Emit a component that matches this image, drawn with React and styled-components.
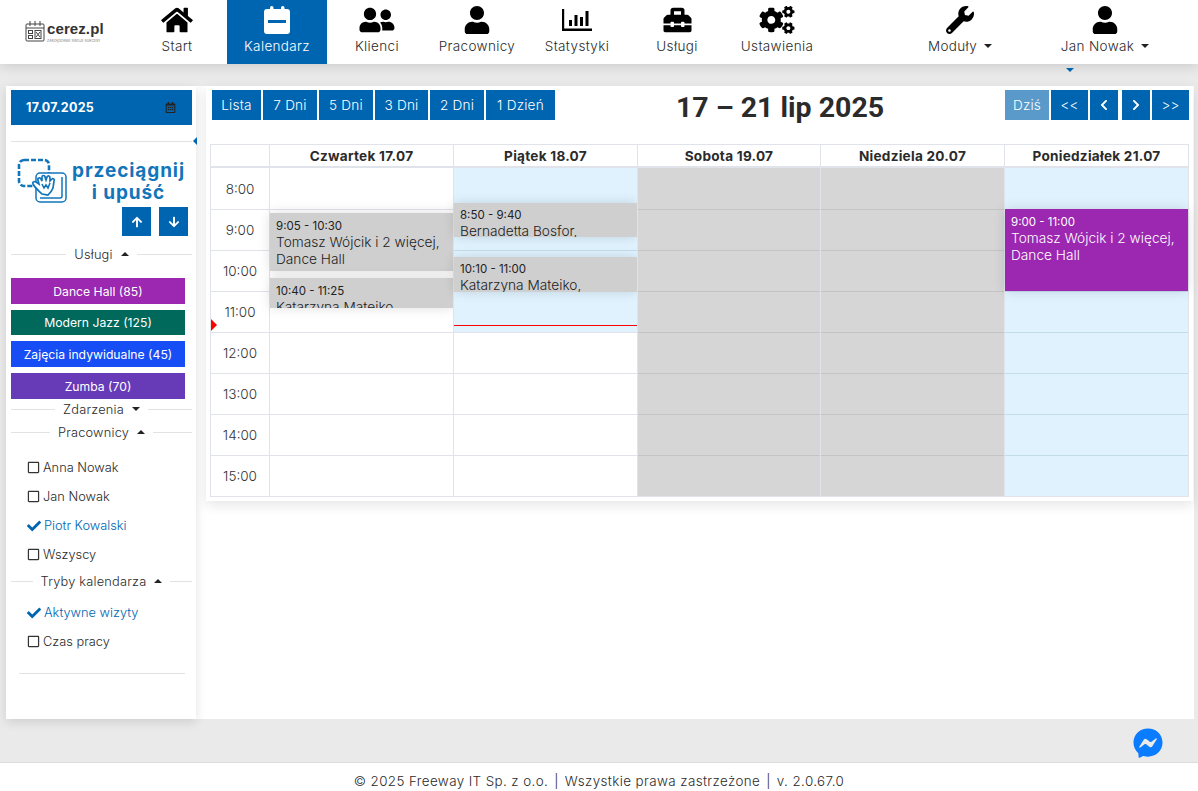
import React from 'react';
import styled, { createGlobalStyle } from 'styled-components';
import {
  FaHome, FaUserFriends, FaUser, FaToolbox, FaCogs, FaWrench, FaChevronLeft, FaChevronRight,
  FaArrowUp, FaArrowDown, FaCheck, FaRegSquare, FaFacebookMessenger, FaRegCalendarAlt,
} from 'react-icons/fa';

const BLUE = '#0065b0';

const GlobalStyle = createGlobalStyle`
  html, body { margin: 0; padding: 0; height: 100%; }
  body {
    background: #eaeaea;
    font-family: Inter, "Liberation Sans", sans-serif;
    color: #2b2b2b;
    overflow: hidden;
  }
  * { box-sizing: border-box; }
`;

const Page = styled.div`
  width: 1198px;
  height: 791px;
  display: flex;
  flex-direction: column;
`;

const Header = styled.header`
  height: 64px;
  flex: none;
  background: #fff;
  display: flex;
  box-shadow: 0 2px 12px rgba(0, 0, 0, 0.14);
  position: relative;
  z-index: 3;
`;

const LogoBox = styled.div`
  width: 127px;
  flex: none;
  padding: 20px 0 0 25px;
`;

const LogoRow = styled.div`
  display: flex;
  align-items: flex-start;
  gap: 2px;
`;

const LogoName = styled.div`
  font-family: "Liberation Sans", sans-serif;
  font-size: 15px;
  font-weight: 700;
  line-height: 17px;
  letter-spacing: 0.1px;
  color: #333;
`;

const LogoSub = styled.div`
  font-size: 3.4px;
  line-height: 4px;
  margin-top: 2px;
  color: #777;
  white-space: nowrap;
`;

const NavItem = styled.div`
  width: 100px;
  flex: none;
  height: 64px;
  padding-top: 6px;
  display: flex;
  flex-direction: column;
  align-items: center;
  background: ${(p) => (p.$active ? BLUE : 'transparent')};
  color: ${(p) => (p.$active ? '#fff' : '#000')};
  & > svg { height: 28px; width: ${(p) => p.$iconWidth}px; flex: none; }
`;

const NavLabel = styled.div`
  font-size: 13.5px;
  font-weight: 300;
  letter-spacing: 0.35px;
  line-height: 18px;
  margin-top: 3px;
  white-space: nowrap;
  color: ${(p) => (p.$active ? '#fff' : '#2b2b2b')};
  display: flex;
  align-items: center;
  gap: 7px;
`;

const Spacer = styled.div`
  width: ${(p) => p.$width}px;
  flex: none;
`;

const Caret = styled.span`
  display: block;
  width: 0;
  height: 0;
  border-left: ${(p) => p.$size || 4}px solid transparent;
  border-right: ${(p) => p.$size || 4}px solid transparent;
  ${(p) => (p.$up ? 'border-bottom' : 'border-top')}: ${(p) => p.$size || 4}px solid ${(p) => p.$color || '#222'};
  flex: none;
`;

const MenuMark = styled.div`
  position: absolute;
  left: 1066px;
  top: 68px;
`;

const Body = styled.div`
  height: 655px;
  flex: none;
  padding: 22px 4px 0 6px;
  display: flex;
  align-items: flex-start;
`;

const Sidebar = styled.aside`
  width: 190px;
  height: 633px;
  flex: none;
  background: #fff;
  box-shadow: 0 3px 10px rgba(0, 0, 0, 0.12);
  padding: 4px 4px 0 5px;
  position: relative;
  z-index: 2;
`;

const DateButton = styled.div`
  height: 35px;
  width: 181px;
  background: ${BLUE};
  color: #fff;
  display: flex;
  align-items: center;
  justify-content: space-between;
  padding: 0 16px 0 15px;
  font-size: 12.5px;
  font-weight: 700;
  letter-spacing: 0.3px;
  & > svg { color: #222; font-size: 11px; }
`;

const Rule = styled.div`
  height: 1px;
  width: 181px;
  margin-top: 16px;
  background: #e2e2e2;
  position: relative;
`;

const RuleArrow = styled.span`
  position: absolute;
  right: -5px;
  top: -4px;
  border-top: 4px solid transparent;
  border-bottom: 4px solid transparent;
  border-right: 4px solid ${BLUE};
`;

const DragPanel = styled.div`
  display: flex;
  margin: 15px 0 0 6px;
  height: 48px;
`;

const DragText = styled.div`
  flex: none;
  width: 117px;
  margin: 3px 0 0 2px;
  text-align: center;
  color: #1275ba;
  font-size: 19px;
  font-weight: 700;
  line-height: 22px;
  letter-spacing: 0.9px;
  white-space: nowrap;
`;

const ArrowRow = styled.div`
  display: flex;
  justify-content: flex-end;
  gap: 8px;
  width: 177px;
  margin-top: 2px;
`;

const ArrowButton = styled.div`
  width: 29px;
  height: 29px;
  background: ${BLUE};
  color: #fff;
  display: flex;
  align-items: center;
  justify-content: center;
  font-size: 12px;
`;

const SectionTitle = styled.div`
  width: 181px;
  height: ${(p) => p.$height || 18}px;
  margin-top: ${(p) => p.$top || 0}px;
  display: flex;
  align-items: center;
  gap: 8px;
  font-size: 12.8px;
  font-weight: 300;
  letter-spacing: 0.2px;
  white-space: nowrap;
  color: #2b2b2b;
  &::before, &::after {
    content: "";
    flex: 1;
    height: 1px;
    background: #e2e2e2;
  }
  & > span { display: flex; align-items: center; gap: 8px; }
`;

const ServiceList = styled.div`
  display: flex;
  flex-direction: column;
  gap: 6px;
  width: 174px;
  margin-top: 15px;
`;

const ServiceButton = styled.div`
  height: ${(p) => p.$height || 26}px;
  background: ${(p) => p.$color};
  color: #fff;
  display: flex;
  align-items: center;
  justify-content: center;
  font-size: 12.2px;
  font-weight: 400;
  white-space: nowrap;
`;

const CheckList = styled.div`
  margin: ${(p) => p.$top}px 0 0 16px;
  display: flex;
  flex-direction: column;
`;

const CheckRow = styled.div`
  height: 29px;
  display: flex;
  align-items: center;
  gap: 3px;
  font-size: 12.8px;
  font-weight: 300;
  color: ${(p) => (p.$checked ? BLUE : '#2b2b2b')};
  & > svg {
    flex: none;
    font-size: ${(p) => (p.$checked ? 14 : 13)}px;
    color: ${(p) => (p.$checked ? BLUE : '#333')};
  }
`;

const SideBottom = styled.div`
  height: 1px;
  width: 166px;
  margin: 17px 0 0 8px;
  background: #e2e2e2;
`;

const Main = styled.main`
  flex: 1;
  height: 633px;
  background: #fff;
  position: relative;
`;

const Card = styled.div`
  width: 987px;
  height: 415px;
  margin-left: 10px;
  padding: 4px 4px 0 6px;
  background: #fff;
  box-shadow: 0 4px 12px rgba(0, 0, 0, 0.1);
`;

const Toolbar = styled.div`
  height: 54px;
  display: flex;
  align-items: flex-start;
`;

const ButtonGroup = styled.div`
  display: flex;
  gap: 2px;
  flex: none;
`;

const ToolButton = styled.div`
  height: 30px;
  width: ${(p) => p.$width}px;
  margin-left: ${(p) => p.$gap || 0}px;
  background: ${(p) => (p.$muted ? '#5a9acb' : BLUE)};
  color: #fff;
  display: flex;
  align-items: center;
  justify-content: center;
  font-size: 13.6px;
  font-weight: 300;
  letter-spacing: 0.2px;
  white-space: nowrap;
  & > svg { font-size: 12px; }
`;

const Title = styled.h1`
  flex: 1;
  margin: 0;
  height: 36px;
  text-align: center;
  font-family: Roboto, "Liberation Sans", sans-serif;
  font-size: 28.5px;
  font-weight: 700;
  line-height: 36px;
  color: #2b2b2b;
  white-space: nowrap;
`;

const Grid = styled.div`
  display: grid;
  grid-template-columns: 58px 184px 184px 183px 184px 184px;
  width: 979px;
  margin-left: -2px;
  border: 1px solid #e0e3ea;
`;

const HeadCell = styled.div`
  height: 23px;
  border-bottom: 2px solid #e0e3ea;
  border-left: ${(p) => (p.$first ? 'none' : '1px solid #e0e3ea')};
  display: flex;
  align-items: center;
  justify-content: center;
  font-size: 13.6px;
  font-weight: 700;
  letter-spacing: 0.25px;
  white-space: nowrap;
  color: #2b2b2b;
`;

const TimeColumn = styled.div`
  position: relative;
`;

const TimeCell = styled.div`
  height: 41px;
  border-top: ${(p) => (p.$first ? 'none' : '1px solid #e0e3ea')};
  display: flex;
  align-items: center;
  justify-content: center;
  font-size: 13.5px;
  font-weight: 300;
  color: #333;
`;

const NowMark = styled.span`
  position: absolute;
  left: 0;
  top: 151px;
  border-top: 6px solid transparent;
  border-bottom: 6px solid transparent;
  border-left: 6px solid #f00;
`;

const DayColumn = styled.div`
  position: relative;
  border-left: 1px solid #e0e3ea;
`;

const SlotCell = styled.div`
  height: 41px;
  background: ${(p) => p.$bg};
  border-top: ${(p) => (p.$first ? 'none' : `1px solid ${p.$line}`)};
`;

const NowLine = styled.div`
  position: absolute;
  left: 0;
  right: 0;
  top: ${(p) => p.$top}px;
  height: 1px;
  background: #f00;
`;

const EventBox = styled.div`
  position: absolute;
  left: 0;
  right: 0;
  top: ${(p) => p.$top}px;
  height: ${(p) => p.$height}px;
  background: ${(p) => p.$bg};
  color: ${(p) => p.$fg};
  padding: ${(p) => p.$pad || 4}px 6px 0 6px;
  overflow: hidden;
  box-shadow: 0 0 12px rgba(0, 0, 0, 0.13);
`;

const EventTime = styled.div`
  font-size: 11.5px;
  font-weight: 400;
  line-height: 15px;
  white-space: nowrap;
`;

const EventName = styled.div`
  font-size: 13.7px;
  font-weight: 300;
  line-height: 17px;
  white-space: nowrap;
`;

const BelowBody = styled.div`
  height: 44px;
  flex: none;
  border-bottom: 1px solid #dcdcdc;
  display: flex;
  justify-content: flex-end;
  padding: 9px 35px 0 0;
  color: #0a7cff;
  font-size: 30px;
`;

const Footer = styled.footer`
  flex: 1;
  background: #fff;
  display: flex;
  align-items: center;
  justify-content: center;
  gap: 6px;
  font-size: 13.4px;
  font-weight: 300;
  letter-spacing: 0.4px;
  color: #2b2b2b;
  padding-top: 8px;
`;

function CalendarIcon() {
  return (
    <svg viewBox="0 0 26 28" fill="currentColor">
      <rect x="6" y="0" width="3.5" height="6" rx="1.7" />
      <rect x="17" y="0" width="3.5" height="6" rx="1.7" />
      <path fillRule="evenodd" d="M3 3h20a3 3 0 0 1 3 3v19a3 3 0 0 1-3 3H3a3 3 0 0 1-3-3V6a3 3 0 0 1 3-3zM4 14v3h18v-3z" />
    </svg>
  );
}

function StatsIcon() {
  return (
    <svg viewBox="0 -3 30 28" fill="currentColor">
      <path d="M0 0h2.2v19.6H30V22H0z" />
      <rect x="7" y="11" width="3" height="6" />
      <rect x="12.5" y="6" width="3" height="11" />
      <rect x="18" y="8" width="3" height="9" />
      <rect x="23.5" y="2" width="3" height="15" />
    </svg>
  );
}

function LogoIcon() {
  return (
    <svg width="20" height="22" viewBox="0 0 20 22" fill="none" stroke="#444" strokeWidth="1">
      <rect x="1" y="4" width="18" height="17" rx="1" />
      <path d="M1 8h18M5 1v5M10 1v5M15 1v5" />
      <rect x="3.5" y="10.5" width="4" height="3" />
      <rect x="3.5" y="15.5" width="4" height="3" />
      <rect x="10" y="10.5" width="6" height="8" />
      <path d="M11 12l4 5M15 12l-4 5" />
    </svg>
  );
}

function DragIcon() {
  return (
    <svg width="51" height="47" viewBox="0 0 51 47" fill="none" stroke="#1275ba" strokeWidth="1.5" style={{ flex: 'none' }}>
      <rect x="2" y="3" width="30" height="26" rx="5" strokeWidth="2.6" strokeDasharray="5 2" />
      <rect x="19" y="16" width="30" height="29" rx="4" fill="#fff" />
      <path d="M23 41h20a2 2 0 0 0 2-2V20" />
      <path d="M25 37c-3-3-7-6-9-10-1-2 1-3 3-2l3 2-1-4c-1-2 2-3 3-1l1 2 0-4c0-2 3-2 3 0l1 3 1-3c1-2 3-1 3 1l0 3 2-2c1-1 3 0 2 2l-1 7c-1 3-3 5-5 7z" fill="#fff" strokeWidth="1.7" />
      <path d="M25 27l2 4 2-3 2 3 2-5" strokeWidth="1.6" />
    </svg>
  );
}

const navLeft = [
  { label: 'Start', icon: <FaHome />, width: 32 },
  { label: 'Kalendarz', icon: <CalendarIcon />, width: 26, active: true },
  { label: 'Klienci', icon: <FaUserFriends />, width: 36 },
  { label: 'Pracownicy', icon: <FaUser />, width: 26 },
  { label: 'Statystyki', icon: <StatsIcon />, width: 30 },
  { label: 'Usługi', icon: <FaToolbox />, width: 29 },
  { label: 'Ustawienia', icon: <FaCogs />, width: 36 },
];

const services = [
  { name: 'Dance Hall (85)', color: '#9c27b0', height: 26 },
  { name: 'Modern Jazz (125)', color: '#00695c', height: 25 },
  { name: 'Zajęcia indywidualne (45)', color: '#174df5', height: 26 },
  { name: 'Zumba (70)', color: '#673ab7', height: 26 },
];

const hours = ['8:00', '9:00', '10:00', '11:00', '12:00', '13:00', '14:00', '15:00'];

const BLUE_BG = '#dff2fe';
const GRAY_BG = '#d6d6d6';

const days = [
  {
    head: 'Czwartek 17.07',
    bg: () => '#fff',
    line: () => '#e0e3ea',
    events: [
      { top: 45, height: 58, time: '9:05 - 10:30', name: ['Tomasz Wójcik i 2 więcej,', 'Dance Hall'], pad: 6 },
      { top: 110, height: 30, time: '10:40 - 11:25', name: ['Katarzyna Mateiko,'], pad: 6 },
    ],
  },
  {
    head: 'Piątek 18.07',
    bg: (i) => (i < 4 ? BLUE_BG : '#fff'),
    line: (i) => (i < 4 ? '#c3dcea' : '#e0e3ea'),
    now: 157,
    events: [
      { top: 35, height: 34, time: '8:50 - 9:40', name: ['Bernadetta Bosfor,'], pad: 5 },
      { top: 89, height: 35, time: '10:10 - 11:00', name: ['Katarzyna Mateiko,'], pad: 5 },
    ],
  },
  { head: 'Sobota 19.07', bg: () => GRAY_BG, line: () => '#c4c4c4', events: [] },
  { head: 'Niedziela 20.07', bg: () => GRAY_BG, line: () => '#c4c4c4', events: [] },
  {
    head: 'Poniedziałek 21.07',
    bg: () => BLUE_BG,
    line: () => '#c3dcea',
    events: [
      { top: 41, height: 82, time: '9:00 - 11:00', name: ['Tomasz Wójcik i 2 więcej,', 'Dance Hall'], bg: '#9c27b0', fg: '#fff', pad: 6 },
    ],
  },
];

function Section({ title, up, height, top }) {
  return (
    <SectionTitle $height={height} $top={top}>
      <span>{title}<Caret $up={up} /></span>
    </SectionTitle>
  );
}

export default function App() {
  return (
    <>
      <GlobalStyle />
      <Page>
        <Header>
          <LogoBox>
            <LogoRow>
              <LogoIcon />
              <div>
                <LogoName>cerez.pl</LogoName>
                <LogoSub>ZARZĄDZANIE SWOJE SUKCESY</LogoSub>
              </div>
            </LogoRow>
          </LogoBox>
          {navLeft.map((n) => (
            <NavItem key={n.label} $active={n.active} $iconWidth={n.width}>
              {n.icon}
              <NavLabel $active={n.active}>{n.label}</NavLabel>
            </NavItem>
          ))}
          <Spacer $width={83} />
          <NavItem $iconWidth={28}>
            <FaWrench />
            <NavLabel>Moduły<Caret /></NavLabel>
          </NavItem>
          <Spacer $width={45} />
          <NavItem $iconWidth={26}>
            <FaUser />
            <NavLabel>Jan Nowak<Caret /></NavLabel>
          </NavItem>
          <MenuMark><Caret $color={BLUE} $size={4.5} /></MenuMark>
        </Header>

        <Body>
          <Sidebar>
            <DateButton>17.07.2025<FaRegCalendarAlt /></DateButton>
            <Rule><RuleArrow /></Rule>
            <DragPanel>
              <DragIcon />
              <DragText>przeciągnij<br />i upuść</DragText>
            </DragPanel>
            <ArrowRow>
              <ArrowButton><FaArrowUp /></ArrowButton>
              <ArrowButton><FaArrowDown /></ArrowButton>
            </ArrowRow>
            <Section title="Usługi" up top={9} />
            <ServiceList>
              {services.map((s) => (
                <ServiceButton key={s.name} $color={s.color} $height={s.height}>{s.name}</ServiceButton>
              ))}
            </ServiceList>
            <Section title="Zdarzenia" height={20} />
            <Section title="Pracownicy" up top={4} />
            <CheckList $top={12}>
              <CheckRow><FaRegSquare />Anna Nowak</CheckRow>
              <CheckRow><FaRegSquare />Jan Nowak</CheckRow>
              <CheckRow $checked><FaCheck />Piotr Kowalski</CheckRow>
              <CheckRow><FaRegSquare />Wszyscy</CheckRow>
            </CheckList>
            <Section title="Tryby kalendarza" up top={3} />
            <CheckList $top={8}>
              <CheckRow $checked><FaCheck />Aktywne wizyty</CheckRow>
              <CheckRow><FaRegSquare />Czas pracy</CheckRow>
            </CheckList>
            <SideBottom />
          </Sidebar>

          <Main>
            <Card>
              <Toolbar>
                <ButtonGroup>
                  <ToolButton $width={49}>Lista</ToolButton>
                  <ToolButton $width={54}>7 Dni</ToolButton>
                  <ToolButton $width={54}>5 Dni</ToolButton>
                  <ToolButton $width={53}>3 Dni</ToolButton>
                  <ToolButton $width={54}>2 Dni</ToolButton>
                  <ToolButton $width={69}>1 Dzień</ToolButton>
                </ButtonGroup>
                <Title>17 – 21 lip 2025</Title>
                <ButtonGroup>
                  <ToolButton $width={44} $muted>Dziś</ToolButton>
                  <ToolButton $width={37}>&lt;&lt;</ToolButton>
                  <ToolButton $width={28}><FaChevronLeft /></ToolButton>
                  <ToolButton $width={28} $gap={2}><FaChevronRight /></ToolButton>
                  <ToolButton $width={37}>&gt;&gt;</ToolButton>
                </ButtonGroup>
              </Toolbar>
              <Grid>
                <HeadCell $first />
                {days.map((d) => <HeadCell key={d.head}>{d.head}</HeadCell>)}
                <TimeColumn>
                  {hours.map((h, i) => <TimeCell key={h} $first={i === 0}>{h}</TimeCell>)}
                  <NowMark />
                </TimeColumn>
                {days.map((d) => (
                  <DayColumn key={d.head}>
                    {hours.map((h, i) => (
                      <SlotCell key={h} $first={i === 0} $bg={d.bg(i)} $line={d.line(i)} />
                    ))}
                    {d.now && <NowLine $top={d.now} />}
                    {d.events.map((e) => (
                      <EventBox
                        key={e.time}
                        $top={e.top}
                        $height={e.height}
                        $bg={e.bg || '#cfcfcf'}
                        $fg={e.fg || '#222'}
                        $pad={e.pad}
                      >
                        <EventTime>{e.time}</EventTime>
                        {e.name.map((n) => <EventName key={n}>{n}</EventName>)}
                      </EventBox>
                    ))}
                  </DayColumn>
                ))}
              </Grid>
            </Card>
          </Main>
        </Body>

        <BelowBody><FaFacebookMessenger /></BelowBody>
        <Footer>
          <span>© 2025 Freeway IT Sp. z o.o.</span>
          <span>|</span>
          <span>Wszystkie prawa zastrzeżone</span>
          <span>|</span>
          <span>v. 2.0.67.0</span>
        </Footer>
      </Page>
    </>
  );
}
